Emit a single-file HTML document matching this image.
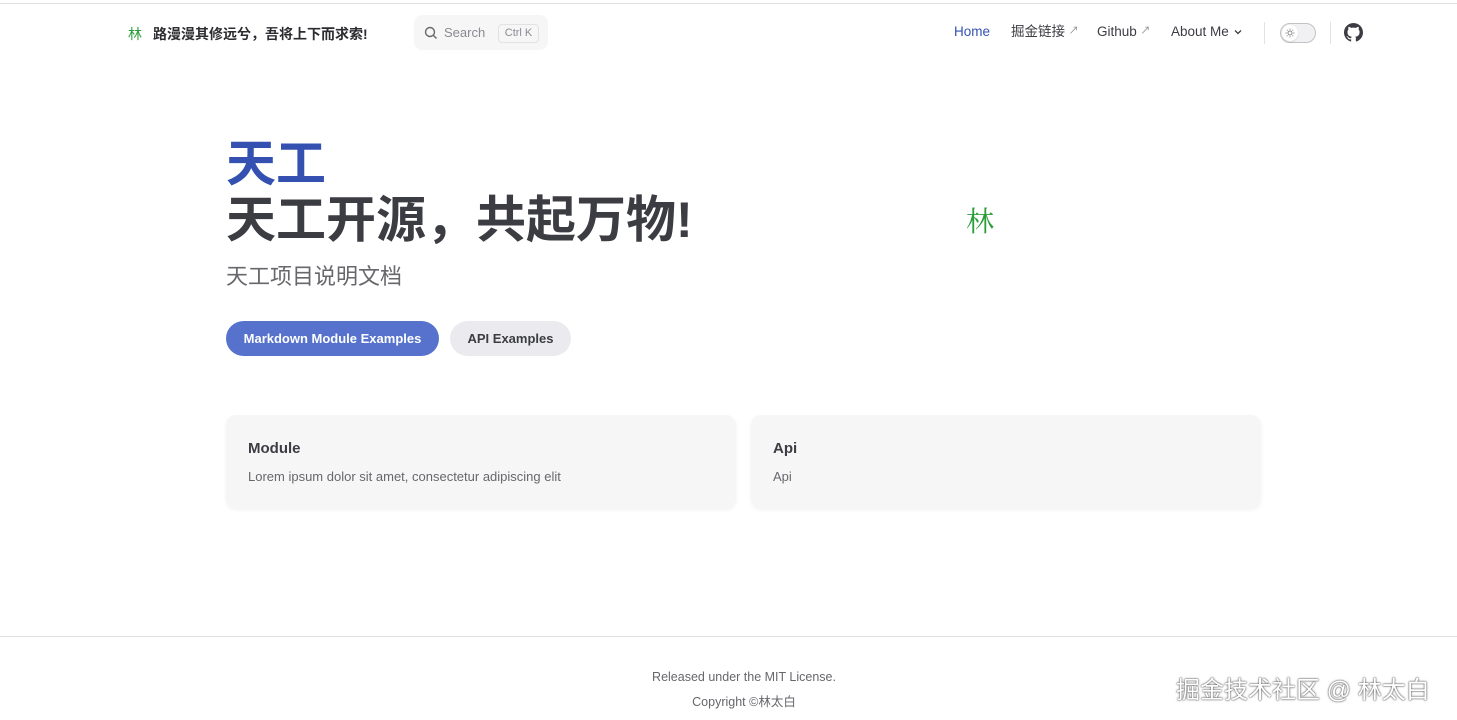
<!DOCTYPE html>
<html><head><meta charset="utf-8"><style>
*{box-sizing:border-box;margin:0;padding:0}
body{width:1457px;height:720px;background:#fff;font-family:"Liberation Sans","Noto Sans CJK SC",sans-serif;color:#3c3c43;position:relative;overflow:hidden}
.topline{position:absolute;top:3px;left:0;right:0;height:1px;background:#e2e2e3}
.abs{position:absolute;white-space:nowrap}
.nav a{position:absolute;top:22px;height:20px;line-height:20px;font-size:13.5px;color:#3c3c43;text-decoration:none;white-space:nowrap}
.btn{position:absolute;top:321px;height:35px;border-radius:18px;font-size:13px;font-weight:bold;line-height:35px;text-align:center}
.card{position:absolute;top:415px;width:510px;height:93px;background:#f6f6f7;border-radius:10px;box-shadow:0 2px 4px rgba(0,0,0,.05)}
.card h3{position:absolute;left:22px;top:25px;font-size:15px;font-weight:600;color:#3c3c43}
.card p{position:absolute;left:22px;top:54px;font-size:13px;color:#67676c}
</style></head><body>
<div class="topline"></div>
<div class="abs" style="left:128px;top:24px;font-size:14px;color:#2a9d3a">林</div>
<div class="abs" style="left:153px;top:24px;font-size:14px;font-weight:bold;color:#2c2c30">路漫漫其修远兮，吾将上下而求索!</div>
<div class="abs" style="left:414px;top:15px;width:134px;height:35px;background:#f6f6f7;border-radius:8px"></div>
<svg class="abs" style="left:424px;top:26px" width="14" height="14" viewBox="0 0 14 14"><circle cx="6" cy="6" r="4.5" fill="none" stroke="#67676c" stroke-width="1.4"/><path d="M9.5 9.5L12.5 12.5" stroke="#67676c" stroke-width="1.4"/></svg>
<div class="abs" style="left:444px;top:25px;font-size:13px;color:#8a8a90">Search</div>
<div class="abs" style="left:498px;top:24px;width:41px;height:19px;border:1px solid #e2e2e3;border-radius:4px;font-size:11px;color:#8a8a90;text-align:center;line-height:17px">Ctrl K</div>
<div class="nav">
<a style="left:954px;color:#3451b2">Home</a>
<a style="left:1011px">掘金链接 <span style="font-size:10px;color:#888;vertical-align:top">↗</span></a>
<a style="left:1097px">Github <span style="font-size:10px;color:#888;vertical-align:top">↗</span></a>
<a style="left:1171px">About Me <svg width="10" height="10" viewBox="0 0 10 10" style="vertical-align:-1px"><path d="M2 3.5L5 6.5L8 3.5" fill="none" stroke="#3c3c43" stroke-width="1.3"/></svg></a>
</div>
<div class="abs" style="left:1264px;top:22px;width:1px;height:22px;background:#e2e2e3"></div>
<div class="abs" style="left:1280px;top:23px;width:36px;height:20px;border:1px solid #c2c2c4;border-radius:10px;background:#f1f1f3"><div style="position:absolute;left:1px;top:1px;width:16px;height:16px;border-radius:50%;background:#fff;box-shadow:0 1px 2px rgba(0,0,0,.1)"><svg width="16" height="16" viewBox="0 0 16 16"><circle cx="8" cy="8" r="2" fill="none" stroke="#888" stroke-width="1"/><path d="M8 3.5v1.2M8 11.3v1.2M3.5 8h1.2M11.3 8h1.2M4.8 4.8l.8.8M10.4 10.4l.8.8M4.8 11.2l.8-.8M10.4 5.6l.8-.8" stroke="#888" stroke-width="0.9"/></svg></div></div>
<div class="abs" style="left:1330px;top:22px;width:1px;height:22px;background:#e2e2e3"></div>
<svg class="abs" style="left:1344px;top:23px" width="19" height="19" viewBox="0 0 16 16"><path fill="#3c3c43" d="M8 0C3.58 0 0 3.58 0 8c0 3.54 2.29 6.53 5.47 7.59.4.07.55-.17.55-.38 0-.19-.01-.82-.01-1.49-2.01.37-2.53-.49-2.69-.94-.09-.23-.48-.94-.82-1.13-.28-.15-.68-.52-.01-.53.63-.01 1.08.58 1.23.82.72 1.21 1.87.87 2.33.66.07-.52.28-.87.51-1.07-1.78-.2-3.64-.89-3.64-3.95 0-.87.31-1.59.82-2.15-.08-.2-.36-1.02.08-2.12 0 0 .67-.21 2.2.82.64-.18 1.32-.27 2-.27.68 0 1.36.09 2 .27 1.53-1.04 2.2-.82 2.2-.82.44 1.1.16 1.92.08 2.12.51.56.82 1.27.82 2.15 0 3.07-1.87 3.75-3.65 3.95.29.25.54.73.54 1.48 0 1.07-.01 1.93-.01 2.2 0 .21.15.46.55.38A8.013 8.013 0 0016 8c0-4.42-3.58-8-8-8z"/></svg>
<div class="abs" style="left:226px;top:134px;font-size:50px;font-weight:bold;color:#3451b2;line-height:60px">天工</div>
<div class="abs" style="left:226px;top:190px;font-size:50px;font-weight:bold;color:#3c3c43;line-height:60px">天工开源，共起万物!</div>
<div class="abs" style="left:226px;top:262px;font-size:22px;color:#67676c;line-height:30px">天工项目说明文档</div>
<div class="abs" style="left:966px;top:200px;font-size:28px;color:#2a9d3a;font-family:'Noto Serif CJK SC',serif">林</div>
<div class="btn" style="left:226px;width:213px;background:#5672cd;color:#fff">Markdown Module Examples</div>
<div class="btn" style="left:450px;width:121px;background:#ebebef;color:#3c3c43">API Examples</div>
<div class="card" style="left:226px"><h3>Module</h3><p>Lorem ipsum dolor sit amet, consectetur adipiscing elit</p></div>
<div class="card" style="left:751px"><h3>Api</h3><p>Api</p></div>
<div class="abs" style="left:0;right:0;top:636px;height:1px;background:#e2e2e3"></div>
<div class="abs" style="left:0;width:1488px;top:670px;text-align:center;font-size:12.5px;color:#67676c">Released under the MIT License.</div>
<div class="abs" style="left:0;width:1488px;top:691px;text-align:center;font-size:12.5px;color:#67676c">Copyright ©林太白</div>
<div class="abs" style="left:1176px;top:670px;font-size:24px;color:#fff;text-shadow:0 0 2px #555,0 0 1px #333">掘金技术社区 @ 林太白</div>
</body></html>
